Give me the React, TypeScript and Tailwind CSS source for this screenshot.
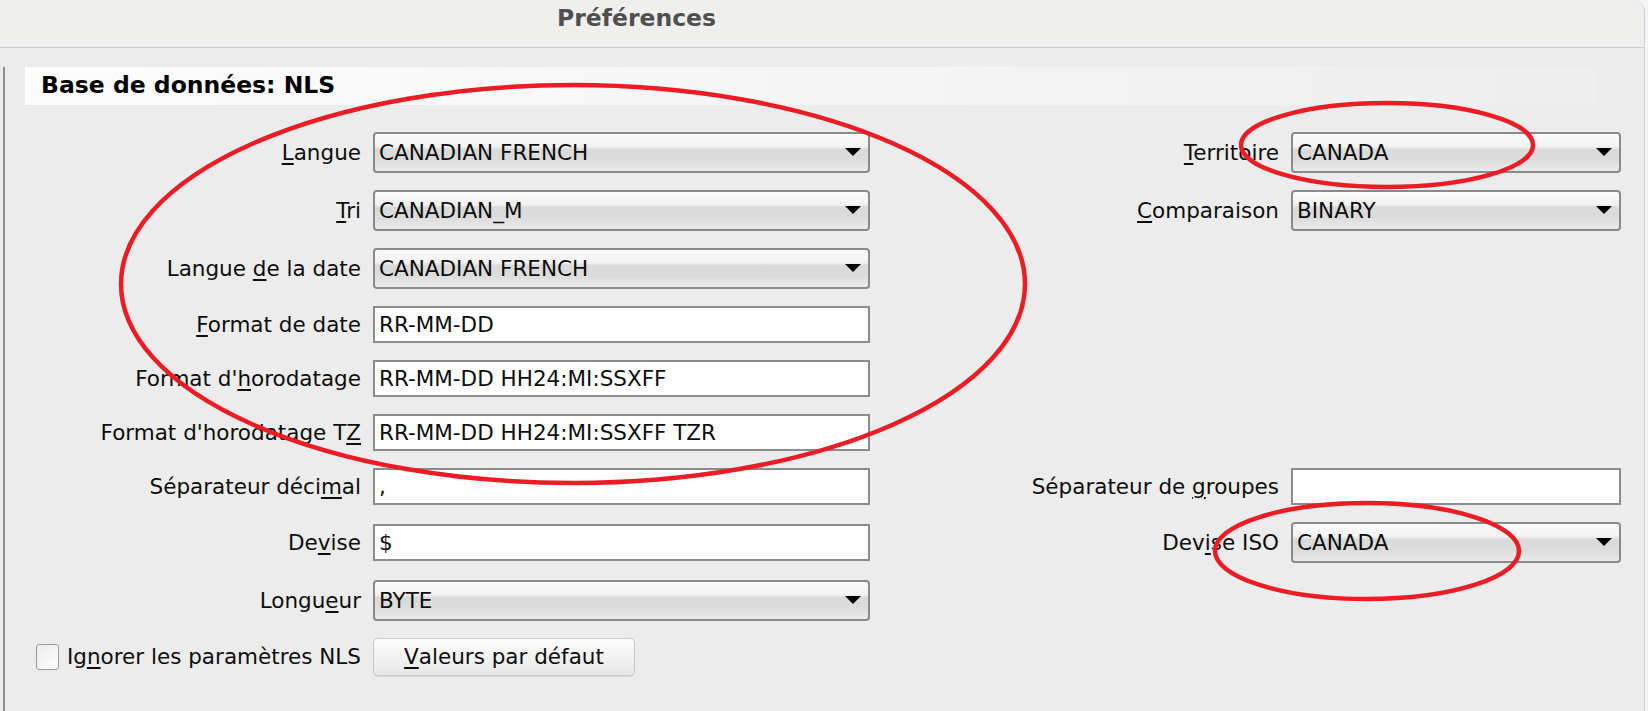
function Mn({ t, k }: { t: string; k: number }) {
  return (
    <>
      {t.slice(0, k)}
      <span className="underline decoration-[2px] underline-offset-[3px]">{t[k]}</span>
      {t.slice(k + 1)}
    </>
  );
}

function Label({ t, k }: { t: string; k: number }) {
  return (
    <div className="text-right whitespace-nowrap text-[21.5px] leading-none text-[#0d0d0d]">
      <Mn t={t} k={k} />
    </div>
  );
}

function Combo({ value }: { value: string }) {
  return (
    <div className="flex h-[41px] items-center justify-between rounded-[4px] border-2 border-[#8a8a8a] bg-[linear-gradient(to_bottom,#fbfbfb_0%,#f2f2f2_34%,#dadada_42%,#dcdcdc_70%,#ebebeb_100%)] pl-[4px] pr-[7px]">
      <span className="text-[21.5px] leading-none text-[#0d0d0d]">{value}</span>
      <svg width="16" height="8" viewBox="0 0 16 8" className="mb-[1px]">
        <polygon points="0,0 16,0 8,8" fill="#000" />
      </svg>
    </div>
  );
}

function Field({ value }: { value: string }) {
  return (
    <div className="flex h-[37px] items-center border-2 border-[#8c8c8c] bg-white pl-[4px]">
      <span className="text-[21.5px] leading-none text-[#0d0d0d]">{value}</span>
    </div>
  );
}

export default function App() {
  return (
    <div className="relative h-[711px] w-[1648px] overflow-hidden bg-[#f4f4f4] font-['DejaVu_Sans',sans-serif]">
      <div className="h-full w-[1645px] rounded-tr-[12px] border-r border-[#cfcfcf] bg-[#ececec]">
        <div className="h-[48px] rounded-tr-[12px] border-b border-[#c8c8c8] bg-[#efefed] pl-[557px] pt-[4px]">
          <span className="text-[23.5px] font-bold leading-[28px] text-[#4f4f4f]">Préférences</span>
        </div>

        <div className="pt-[19px]">
          <div className="ml-[3px] h-[644px] border-l-2 border-[#8f8f8f]">
            <div className="ml-[20px] flex h-[38px] w-[1572px] items-center bg-[linear-gradient(to_right,#fdfdfd,#eeeeee)] pl-[16px]">
              <span className="text-[23.5px] font-bold leading-none text-black">Base de données: NLS</span>
            </div>

            <div className="ml-[7px] mt-[27px] grid grid-cols-[349px_497px_397px_330px] items-center gap-x-[12px] gap-y-[17px]">
              <Label t="Langue" k={0} />
              <Combo value="CANADIAN FRENCH" />
              <Label t="Territoire" k={0} />
              <Combo value="CANADA" />

              <Label t="Tri" k={0} />
              <Combo value="CANADIAN_M" />
              <Label t="Comparaison" k={0} />
              <Combo value="BINARY" />

              <Label t="Langue de la date" k={7} />
              <Combo value="CANADIAN FRENCH" />
              <div />
              <div />

              <Label t="Format de date" k={0} />
              <Field value="RR-MM-DD" />
              <div />
              <div />

              <Label t="Format d'horodatage" k={9} />
              <Field value="RR-MM-DD HH24:MI:SSXFF" />
              <div />
              <div />

              <Label t="Format d'horodatage TZ" k={21} />
              <Field value="RR-MM-DD HH24:MI:SSXFF TZR" />
              <div />
              <div />

              <Label t="Séparateur décimal" k={15} />
              <Field value="," />
              <Label t="Séparateur de groupes" k={14} />
              <Field value="" />

              <Label t="Devise" k={2} />
              <Field value="$" />
              <Label t="Devise ISO" k={3} />
              <Combo value="CANADA" />

              <Label t="Longueur" k={5} />
              <Combo value="BYTE" />
              <div />
              <div />

              <div className="flex items-center gap-[8px] pl-[24px]">
                <div className="h-[26px] w-[25px] rounded-[3px] border-[1.5px] border-[#9a9a9a] bg-[linear-gradient(to_bottom_right,#ececec,#ffffff)]" />
                <span className="whitespace-nowrap text-[21.5px] leading-none text-[#0d0d0d]">
                  <Mn t="Ignorer les paramètres NLS" k={2} />
                </span>
              </div>
              <div>
                <button className="flex h-[38px] w-[262px] items-center justify-center rounded-[5px] border border-[#c9c9c9] bg-[linear-gradient(to_bottom,#fdfdfd_0%,#f3f3f3_45%,#e7e7e7_100%)] text-[21.5px] leading-none text-[#0d0d0d] shadow-[0_1px_1px_rgba(0,0,0,0.08)]">
                  <Mn t="Valeurs par défaut" k={0} />
                </button>
              </div>
              <div />
              <div />
            </div>
          </div>
        </div>
      </div>

      <svg className="pointer-events-none absolute inset-0" width="1648" height="711" viewBox="0 0 1648 711">
        <ellipse cx="573" cy="284" rx="452" ry="199" fill="none" stroke="#ec1c24" strokeWidth="4.5" />
        <ellipse cx="1387" cy="145" rx="146" ry="42" fill="none" stroke="#ec1c24" strokeWidth="4.5" />
        <ellipse cx="1367" cy="551" rx="152" ry="48" fill="none" stroke="#ec1c24" strokeWidth="4.5" />
      </svg>
    </div>
  );
}
